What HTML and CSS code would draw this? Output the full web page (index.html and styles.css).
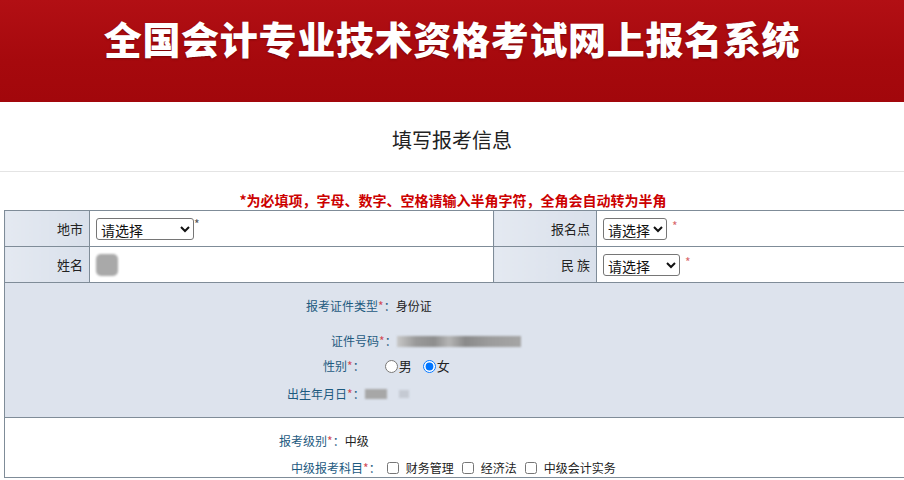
FILE: index.html
```
<!DOCTYPE html>
<html lang="zh-CN">
<head>
    <meta charset="UTF-8">
    <meta name="viewport" content="width=device-width, initial-scale=1.0">
    <title>全国会计专业技术资格考试网上报名系统</title>
    <link rel="stylesheet" href="styles.css">
</head>
<body>

<div class="banner">
    <h1 class="banner-title">全国会计专业技术资格考试网上报名系统</h1>
</div>

<div class="page-title">填写报考信息</div>

<p class="notice">*为必填项，字母、数字、空格请输入半角字符，全角会自动转为半角</p>

<table class="form-table">
    <colgroup>
        <col class="c-label">
        <col class="c-value">
        <col class="c-label2">
        <col>
    </colgroup>
    <tr>
        <td class="label">地市</td>
        <td class="value">
            <select class="sel sel-city"><option>请选择</option></select><span class="star-top">*</span>
        </td>
        <td class="label">报名点</td>
        <td class="value">
            <select class="sel sel-site"><option>请选择</option></select> <span class="star">*</span>
        </td>
    </tr>
    <tr>
        <td class="label">姓名</td>
        <td class="value"><span class="blur blur-name"></span></td>
        <td class="label">民 族</td>
        <td class="value">
            <select class="sel sel-nation"><option>请选择</option></select> <span class="star">*</span>
        </td>
    </tr>
    <tr>
        <td colspan="4" class="section section-blue">
            <div class="line line-idtype">
                <span class="key">报考证件类型<em>*</em>：</span><span>身份证</span>
            </div>
            <div class="line line-idno">
                <span class="key">证件号码<em>*</em>：</span><span class="blur blur-id"></span>
            </div>
            <div class="line line-sex">
                <span class="key">性别<em>*</em>：</span>
                <label class="opt opt-first"><input type="radio" name="sex">男</label>
                <label class="opt"><input type="radio" name="sex" checked>女</label>
            </div>
            <div class="line line-birth">
                <span class="key">出生年月日<em>*</em>：</span><span class="blur blur-date"></span><span class="blur blur-icon"></span>
            </div>
        </td>
    </tr>
    <tr>
        <td colspan="4" class="section section-white">
            <div class="line line-level">
                <span class="key">报考级别<em>*</em>：</span><span>中级</span>
            </div>
            <div class="line line-subject">
                <span class="key">中级报考科目<em>*</em>：</span>
                <label class="chk"><input type="checkbox">财务管理</label>
                <label class="chk"><input type="checkbox">经济法</label>
                <label class="chk"><input type="checkbox">中级会计实务</label>
            </div>
        </td>
    </tr>
</table>

</body>
</html>
```

FILE: styles.css
```
body {
    margin: 0;
    padding: 0;
    width: 904px;
    height: 480px;
    overflow: hidden;
    background: #fff;
    font-family: "Noto Sans CJK SC", "Noto Sans", sans-serif;
    color: #222;
}

/* 顶部红色横幅 */
.banner {
    height: 102px;
    background: linear-gradient(180deg, #b20f14 0%, #a6090d 60%, #a2070b 100%);
}

.banner-title {
    margin: 0;
    padding-top: 18px;
    text-align: center;
    font-family: "Noto Sans CJK SC", sans-serif;
    font-size: 38px;
    line-height: 40px;
    font-weight: 900;
    letter-spacing: 0.7px;
    color: #fff;
    text-shadow: 0 1px 2px rgba(80, 0, 0, 0.5);
}

.page-title {
    height: 70px;
    box-sizing: border-box;
    padding-top: 26px;
    line-height: 24px;
    text-align: center;
    font-size: 20px;
    color: #222;
    border-bottom: 1px solid #e4e4e4;
}

.notice {
    margin: 18px 0 0 0;
    line-height: 20px;
    text-align: center;
    font-size: 14px;
    font-weight: bold;
    color: #cc0000;
    padding-left: 2px;
}

/* 表单表格 */
.form-table {
    margin-left: 4px;
    width: 920px;
    table-layout: fixed;
    border-collapse: collapse;
    font-size: 13px;
}

.c-label { width: 85px; }
.c-value { width: 404px; }
.c-label2 { width: 103px; }

.form-table td {
    border: 1px solid #7f8c98;
    padding: 0;
}

.form-table .label {
    height: 35px;
    text-align: right;
    padding-right: 6px;
    background: linear-gradient(90deg, #e4e9f1, #d9e0eb);
    color: #222;
}

.form-table .value {
    padding-left: 6px;
    background: #fff;
}

.sel {
    height: 22px;
    font-size: 14px;
    font-family: "Noto Sans CJK SC", sans-serif;
    color: #111;
    border: 1px solid #767676;
    border-radius: 3px;
    background: #fff;
    vertical-align: middle;
    padding: 0;
}

.sel-city { width: 98px; }
.sel-site { width: 64px; }
.sel-nation { width: 77px; }

.star-top {
    font-size: 12px;
    color: #555;
    vertical-align: top;
    position: relative;
    top: -2px;
}

.star {
    font-size: 12px;
    color: #d9686d;
    vertical-align: top;
    margin-left: 2px;
}

.blur {
    display: inline-block;
    filter: blur(1.2px);
    vertical-align: middle;
}

.blur-name {
    width: 22px;
    height: 22px;
    border-radius: 5px;
    background: #a9a9a9;
}

/* 大段信息区 */
.section {
    font-size: 12px;
    vertical-align: top;
}

.section-blue {
    height: 134px;
    background: #dde3ed;
}

.section-white {
    background: #fff;
}

.line {
    display: flex;
    align-items: center;
    line-height: 18px;
    height: 18px;
    white-space: nowrap;
}

.key {
    color: #1d5a7f;
}

.key em {
    font-style: normal;
    color: #d24b55;
}

.line-idtype { margin: 14px 0 0 301px; }
.line-idno { margin: 17px 0 0 326px; }
.line-sex { margin: 7px 0 0 318px; }
.line-birth { margin: 10px 0 0 282px; }

.line-level { margin: 14px 0 0 274px; }
.line-subject { margin: 9px 0 0 286px; }

.blur-id {
    width: 124px;
    height: 11px;
    background: linear-gradient(90deg, #c8c8c8 0%, #9a9a9a 15%, #8e8e8e 30%, #b5b5b5 42%, #8a8a8a 55%, #9c9c9c 75%, #a5a5a5 100%);
}

.blur-date {
    width: 22px;
    height: 10px;
    background: #a7a7a7;
}

.blur-icon {
    width: 10px;
    height: 8px;
    background: #c5cad3;
    margin-left: 12px;
}

.opt {
    display: flex;
    align-items: center;
    font-size: 13px;
    color: #222;
}

.opt input {
    width: 13px;
    height: 13px;
    margin: 0 1px 0 0;
}

.opt-first { margin-left: 20px; margin-right: 11px; }

.chk {
    display: flex;
    align-items: center;
    color: #222;
}

.chk input {
    width: 12px;
    height: 12px;
    margin: 0 7px 0 6px;
}

.chk + .chk input {
    margin-left: 8px;
}
```
